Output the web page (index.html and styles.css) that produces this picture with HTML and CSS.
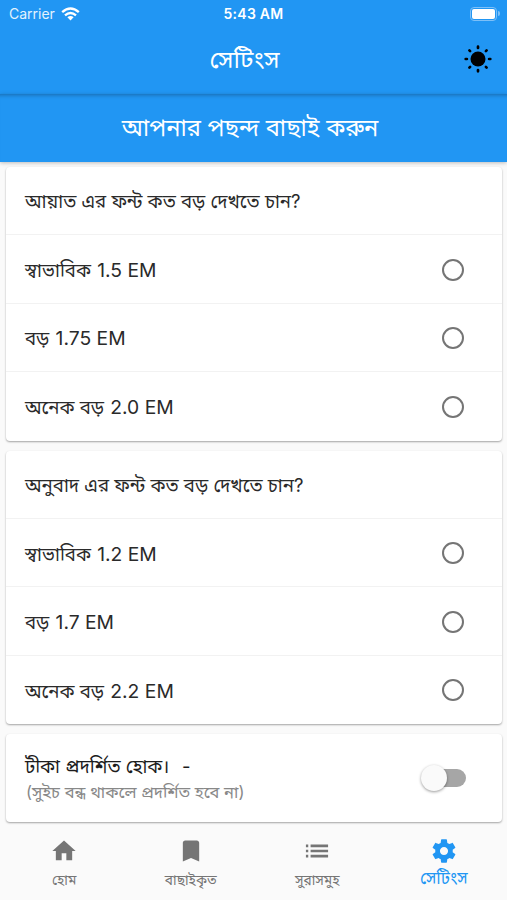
FILE: index.html
```html
<!DOCTYPE html>
<html lang="bn">
<head>
    <meta charset="UTF-8">
    <meta name="viewport" content="width=device-width, initial-scale=1.0">
    <title>সেটিংস</title>
    <link rel="stylesheet" href="styles.css">
</head>
<body>
    <header class="header">
        <div class="status-bar">
            <div class="carrier">Carrier
                <svg width="19" height="14" viewBox="0 0 19 14"><path d="M1.2 5.2Q9.5-2 17.8 5.2M4 8.3Q9.5 3.7 15 8.3" fill="none" stroke="#fff" stroke-width="2.4"/><path d="M6.4 10.2Q9.5 7.8 12.6 10.2L9.5 13.4z" fill="#fff"/></svg>
            </div>
            <div class="time">5:43 AM</div>
            <div class="battery"><span class="battery-body"></span><span class="battery-tip"></span></div>
        </div>
        <div class="toolbar">
            <h1 class="title">সেটিংস</h1>
            <svg class="sun" width="28" height="28" viewBox="0 0 28 28"><circle cx="14" cy="14" r="7.5"/><path d="M14 1.7v1.2M14 25.1v1.2M1.7 14h1.2M25.1 14h1.2M5.4 5.4l.7.7M21.9 21.9l.7.7M5.4 22.6l.7-.7M21.9 6.1l.7-.7" stroke="#000" stroke-width="2.7" stroke-linecap="round"/></svg>
        </div>
    </header>
    <div class="sub-header">আপনার পছন্দ বাছাই করুন</div>

    <main class="content">
        <div class="card">
            <div class="row"><span class="label">আয়াত এর ফন্ট কত বড় দেখতে চান?</span></div>
            <div class="row"><span class="label">স্বাভাবিক <span class="size">1.5 EM</span></span><span class="radio"></span></div>
            <div class="row"><span class="label">বড় <span class="size">1.75 EM</span></span><span class="radio"></span></div>
            <div class="row"><span class="label">অনেক বড় <span class="size">2.0 EM</span></span><span class="radio"></span></div>
        </div>
        <div class="card">
            <div class="row"><span class="label">অনুবাদ এর ফন্ট কত বড় দেখতে চান?</span></div>
            <div class="row"><span class="label">স্বাভাবিক <span class="size">1.2 EM</span></span><span class="radio"></span></div>
            <div class="row"><span class="label">বড় <span class="size">1.7 EM</span></span><span class="radio"></span></div>
            <div class="row"><span class="label">অনেক বড় <span class="size">2.2 EM</span></span><span class="radio"></span></div>
        </div>
        <div class="card note">
            <div>
                <div class="label">টীকা প্রদর্শিত হোক। &nbsp;<span class="dash">-</span></div>
                <div class="hint">(সুইচ বন্ধ থাকলে প্রদর্শিত হবে না)</div>
            </div>
            <span class="switch"><span class="knob"></span></span>
        </div>
    </main>

    <nav class="tabs">
        <div class="tab">
            <svg viewBox="0 0 24 24"><path d="M10 20v-6h4v6h5v-8h3L12 3 2 12h3v8z"/></svg>
            <span>হোম</span>
        </div>
        <div class="tab">
            <svg viewBox="0 0 24 24"><path d="M17 3H7c-1.1 0-2 .9-2 2v16l7-3 7 3V5c0-1.1-.9-2-2-2z"/></svg>
            <span>বাছাইকৃত</span>
        </div>
        <div class="tab">
            <svg viewBox="0 0 24 24"><path d="M2.500 6.500h2v2.200h-2zM2.500 10.900h2v2.200h-2zM2.500 15.300h2v2.200h-2zM6.500 6.500h15v2.200h-15zM6.500 10.900h15v2.200h-15zM6.500 15.300h15v2.200h-15z"/></svg>
            <span>সুরাসমুহ</span>
        </div>
        <div class="tab active">
            <svg viewBox="0 0 24 24"><path d="M19.43 12.98c.04-.32.07-.64.07-.98s-.03-.66-.07-.98l2.11-1.65c.19-.15.24-.42.12-.64l-2-3.46c-.12-.22-.39-.3-.61-.22l-2.49 1c-.52-.4-1.08-.73-1.69-.98l-.38-2.65C14.46 2.18 14.25 2 14 2h-4c-.25 0-.46.18-.49.42l-.38 2.65c-.61.25-1.17.59-1.69.98l-2.49-1c-.23-.09-.49 0-.61.22l-2 3.46c-.13.22-.07.49.12.64l2.11 1.65c-.04.32-.07.65-.07.98s.03.66.07.98l-2.11 1.65c-.19.15-.24.42-.12.64l2 3.46c.12.22.39.3.61.22l2.49-1c.52.4 1.08.73 1.69.98l.38 2.65c.03.24.24.42.49.42h4c.25 0 .46-.18.49-.42l.38-2.65c.61-.25 1.17-.59 1.69-.98l2.49 1c.23.09.49 0 .61-.22l2-3.46c.12-.22.07-.49-.12-.64l-2.11-1.65zM12 15.5c-1.93 0-3.5-1.57-3.5-3.5s1.57-3.5 3.500-3.500 3.500 1.570 3.500 3.500-1.570 3.500-3.500 3.500z"/></svg>
            <span>সেটিংস</span>
        </div>
    </nav>
</body>
</html>
```
FILE: styles.css
```css
* {
    box-sizing: border-box;
}
body {
    margin: 0;
    height: 900px;
    display: flex;
    flex-direction: column;
    overflow: hidden;
    background-color: #fafafa;
    color: #2a2a2a;
    font-family: Inter, "Noto Sans", "Noto Sans Bengali", sans-serif;
}
.header {
    height: 94px;
    background-color: #2196f3;
    flex: none;
}
.status-bar {
    height: 27px;
    padding: 0 7px 0 9px;
    display: grid;
    grid-template-columns: 1fr auto 1fr;
    align-items: center;
    color: #fff;
    font-size: 14px;
}
.carrier {
    display: flex;
    align-items: center;
    gap: 6px;
    color: #e3f2fd;
}
.time {
    margin-right: 2px;
    font-weight: 600;
    letter-spacing: 0.25px;
}
.battery {
    display: flex;
    align-items: center;
    justify-content: flex-end;
    gap: 1px;
}
.battery-body {
    width: 27px;
    height: 14px;
    border: 1px solid #7dc0f8;
    border-radius: 4px;
    padding: 1px;
    background: #fff content-box;
}
.battery-tip {
    width: 2px;
    height: 5px;
    background-color: #7dc0f8;
    border-radius: 0 2px 2px 0;
}
.toolbar {
    height: 64px;
    padding: 0 15px 0 0;
    display: grid;
    grid-template-columns: 25px 1fr 28px;
    align-items: center;
}
.title {
    grid-column: 2;
    margin: 0;
    padding-top: 3px;
    text-align: center;
    color: #fff;
    font-size: 24.5px;
    font-weight: 400;
}
.sub-header {
    height: 68px;
    padding: 3px 7px 0 0;
    flex: none;
    display: flex;
    align-items: center;
    justify-content: center;
    background-color: #2196f3;
    color: #fff;
    font-size: 23.7px;
    box-shadow: inset 0 5px 4px -4px rgba(0, 0, 0, 0.3), 0 1px 4px rgba(0, 0, 0, 0.25);
}
.content {
    flex: 1;
    padding: 5px 5px 0 6px;
}
.card {
    margin-bottom: 10px;
    background-color: #fff;
    border-radius: 4px;
    box-shadow: 0 1px 2px rgba(0, 0, 0, 0.35);
}
.row {
    height: 68.4px;
    padding: 0 38px 0 19px;
    display: flex;
    align-items: center;
    justify-content: space-between;
    border-bottom: 1px solid #f2f2f2;
}
.row:last-child {
    border-bottom: none;
}
.label {
    font-size: 18.6px;
    white-space: nowrap;
}
.row .label {
    padding-top: 5px;
}
.size {
    font-size: 19.3px;
    margin-left: 1px;
}
.radio {
    width: 22px;
    height: 22px;
    margin-top: 1px;
    border: 2.5px solid #757575;
    border-radius: 50%;
}
.note {
    height: 88px;
    padding: 0 36px 0 19px;
    display: flex;
    align-items: center;
    justify-content: space-between;
}
.note .label {
    color: #1c1c1c;
    line-height: 28px;
}
.dash {
    margin-left: 2px;
}
.hint {
    padding-left: 1px;
    color: #888;
    font-size: 16.5px;
    line-height: 24px;
}
.switch {
    width: 45px;
    height: 18px;
    border-radius: 9px;
    background: linear-gradient(to right, transparent 12px, #a6a6a6 12px);
    display: flex;
    align-items: center;
}
.knob {
    width: 26px;
    height: 26px;
    flex: none;
    border-radius: 50%;
    background-color: #fafafa;
    box-shadow: 0 1px 3px rgba(0, 0, 0, 0.4);
}
.tabs {
    height: 75px;
    padding-left: 1px;
    flex: none;
    display: flex;
    background-color: #fafafa;
}
.tab {
    flex: 1;
    display: flex;
    flex-direction: column;
    align-items: center;
    padding-top: 12px;
    color: #757575;
    font-size: 13.7px;
}
.tab svg {
    width: 28px;
    height: 28px;
    margin-top: -7px;
    margin-bottom: 7px;
    fill: currentColor;
    flex: none;
}
.tab.active {
    color: #2196f3;
    font-size: 16.7px;
}
.active svg {
    margin-bottom: 3px;
}
```
